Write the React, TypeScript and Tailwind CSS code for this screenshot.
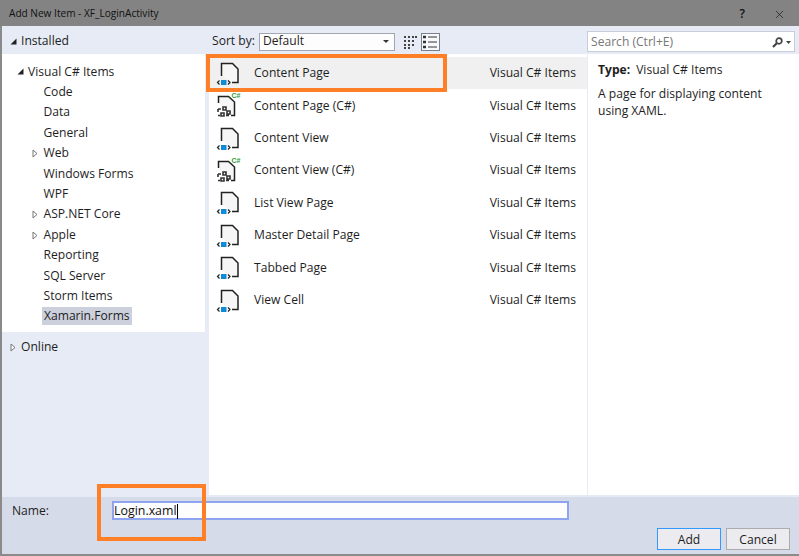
import React from 'react';
import { X } from 'lucide-react';

const treeItems = [
  { label: 'Code' },
  { label: 'Data' },
  { label: 'General' },
  { label: 'Web', arrow: true },
  { label: 'Windows Forms' },
  { label: 'WPF' },
  { label: 'ASP.NET Core', arrow: true },
  { label: 'Apple', arrow: true },
  { label: 'Reporting' },
  { label: 'SQL Server' },
  { label: 'Storm Items' },
];

const templates = [
  { name: 'Content Page', kind: 'xaml' },
  { name: 'Content Page (C#)', kind: 'cs' },
  { name: 'Content View', kind: 'xaml' },
  { name: 'Content View (C#)', kind: 'cs' },
  { name: 'List View Page', kind: 'xaml' },
  { name: 'Master Detail Page', kind: 'xaml' },
  { name: 'Tabbed Page', kind: 'xaml' },
  { name: 'View Cell', kind: 'xaml' },
];

const ExpandedArrow = () => (
  <svg width="7" height="7" viewBox="0 0 7 7" className="shrink-0">
    <path d="M6.5 0.5V6.5H0.5Z" fill="#222" />
  </svg>
);

const CollapsedArrow = () => (
  <svg width="6" height="9" viewBox="0 0 6 9" className="shrink-0">
    <path d="M1 1L5 4.5L1 8Z" fill="#fff" stroke="#777" />
  </svg>
);

const XamlIcon = () => (
  <svg width="26" height="26" viewBox="0 0 26 26" className="shrink-0">
    <path d="M5.5 16V3.5H16.5L22 9V22.5H16" fill="#f6f6f6" stroke="#222" strokeWidth="1.5" />
    <rect x="5" y="20" width="5.5" height="5" fill="#0e8bd6" />
    <path d="M3.5 20.5L1.5 22.5L3.5 24.5M12 20.5L14 22.5L12 24.5" fill="none" stroke="#222" strokeWidth="1.2" />
  </svg>
);

const CsIcon = () => (
  <svg width="28" height="26" viewBox="0 0 28 26" className="shrink-0">
    <path d="M2.5 11V4.5H12.5L18.5 10V23.5H15" fill="#f6f6f6" stroke="#222" strokeWidth="1.5" />
    <path d="M2 17H5M2 17V20M7 15H10V18H7ZM11 19H14V22H11ZM5 21H8V24H5ZM2 23.5H4M10 23.5H13" fill="none" stroke="#333" strokeWidth="1.6" />
    <text x="15.5" y="6" fontSize="7" fontWeight="700" fill="#2e9a3c" fontFamily="'Liberation Sans', sans-serif">C#</text>
  </svg>
);

const GridIcon = () => (
  <svg width="14" height="14" viewBox="0 0 14 14">
    <path d="M1 2H3M5 2H7M9 2H11M12 2H14M1 6H3M5 6H7M9 6H11M1 10H3M5 10H7M9 10H11M1 13H3M5 13H7" stroke="#444" strokeWidth="2" />
  </svg>
);

const ListIcon = () => (
  <svg width="14" height="14" viewBox="0 0 14 14">
    <path d="M0 2H3M0 7H3M0 12H3" stroke="#333" strokeWidth="2.4" />
    <path d="M5 2H14M5 7H14M5 12H14" stroke="#333" strokeWidth="1.2" />
  </svg>
);

const SearchGlyph = () => (
  <svg width="11" height="11" viewBox="0 0 11 11">
    <circle cx="7" cy="4" r="2.8" fill="none" stroke="#444" strokeWidth="1.7" />
    <path d="M4.8 6.2L1 10" stroke="#444" strokeWidth="2.2" />
  </svg>
);

export default function App() {
  return (
    <div className="relative flex h-[556px] w-[799px] flex-col overflow-hidden bg-[#e6ebf5] text-[12.1px] text-[#1e1e1e] font-['Open_Sans','Noto_Sans',sans-serif]">
      <div className="flex h-[26px] shrink-0 items-center justify-between bg-[#838383] pl-[9px] pr-[13px] pt-[2px] text-[10.1px] text-[#111]">
        <span>Add New Item - XF_LoginActivity</span>
        <div className="flex items-center gap-[28px]">
          <span className="text-[12px] font-semibold">?</span>
          <X size={13} strokeWidth={1.2} />
        </div>
      </div>

      <div className="flex min-h-0 flex-1 border-l-2 border-[#8a8a8a]">
        <div className="flex w-[207px] shrink-0 flex-col">
          <div className="flex h-[28px] shrink-0 items-center gap-[4px] pl-[8px] pt-[3px]">
            <ExpandedArrow />
            <span>Installed</span>
          </div>
          <div className="mr-[4px] flex h-[278px] shrink-0 flex-col bg-white pt-[7.5px]">
            <div className="flex h-[20.4px] items-center gap-[4px] pl-[15px]">
              <ExpandedArrow />
              <span>Visual C# Items</span>
            </div>
            {treeItems.map((item) => (
              <div key={item.label} className="relative flex h-[20.4px] items-center pl-[41.5px]">
                {item.arrow && (
                  <span className="absolute left-[30px] top-[6px]">
                    <CollapsedArrow />
                  </span>
                )}
                <span>{item.label}</span>
              </div>
            ))}
            <div className="flex h-[20.4px] items-center pl-[40px]">
              <span className="bg-[#ccd0dc] px-[2px]">Xamarin.Forms</span>
            </div>
          </div>
          <div className="flex h-[28px] items-center gap-[5px] pl-[8px] pt-[2px]">
            <CollapsedArrow />
            <span>Online</span>
          </div>
        </div>

        <div className="flex min-w-0 flex-1 flex-col pb-[2px]">
          <div className="flex h-[28px] shrink-0 items-center pl-[3px] pt-[3px]">
            <span className="mr-[4px]">Sort by:</span>
            <div className="flex h-[18px] w-[136px] items-center justify-between border border-[#a3a7b2] bg-[#fdfdfd] pl-[3px] pr-[5px]">
              <span>Default</span>
              <svg width="6" height="3" viewBox="0 0 6 3"><path d="M0 0H6L3 3Z" fill="#333" /></svg>
            </div>
            <div className="ml-[6px] flex h-[18px] w-[18px] items-center justify-center">
              <GridIcon />
            </div>
            <div className="ml-[2px] flex h-[18px] w-[19px] items-center justify-center border border-[#7a7f8c] bg-[#f7f8fb]">
              <ListIcon />
            </div>
          </div>
          <div className="flex min-h-0 flex-1">
            <div className="w-[378px] shrink-0 bg-white pt-[2.6px]">
              {templates.map((t, i) => (
                <div
                  key={t.name}
                  className={i === 0 ? 'flex h-[32.4px] items-center bg-[#f0f0f0] pr-[11px]' : 'flex h-[32.4px] items-center pr-[11px]'}
                >
                  <div className="flex w-[45px] shrink-0 pl-[7px]">
                    {t.kind === 'xaml' ? <XamlIcon /> : <CsIcon />}
                  </div>
                  <span className="flex-1 pt-[1px]">{t.name}</span>
                  <span className="pt-[1px]">Visual C# Items</span>
                </div>
              ))}
            </div>
            <div className="min-w-0 flex-1 border-l border-[#e8ebf3] bg-white pl-[10px] pt-[7px]">
              <div className="leading-[17px]">
                <span className="font-bold">Type:</span>
                <span className="ml-[6px]">Visual C# Items</span>
              </div>
              <div className="mt-[7px] leading-[17px]">
                A page for displaying content
                <br />
                using XAML.
              </div>
            </div>
          </div>
        </div>
      </div>

      <div className="absolute left-[587px] top-[31px] flex h-[21px] w-[208px] items-center justify-between border border-[#c8cddb] bg-white pl-[3px] pr-[3px] pt-[1px] text-[#777]">
        <span>Search (Ctrl+E)</span>
        <span className="flex items-center gap-[3px]">
          <SearchGlyph />
          <svg width="5" height="3" viewBox="0 0 5 3"><path d="M0 0H5L2.5 3Z" fill="#444" /></svg>
        </span>
      </div>

      <div className="flex h-[59px] shrink-0 flex-col border-b-2 border-l-2 border-[#8a8a8a] bg-[#d6dbe9] pl-[10px] pr-[9px]">
        <div className="flex items-center pt-[4px]">
          <span className="w-[100px] pt-[1px]">Name:</span>
          <div className="flex h-[19px] w-[457px] items-center border-2 border-[#8fa4f0] bg-[#fdfdfd] pt-[1px]">
            <span className="text-[12.4px] text-[#111]">Login.xaml</span>
            <span className="h-[15px] w-px bg-black" />
          </div>
        </div>
        <div className="mt-[8px] flex justify-end gap-[5px]">
          <div className="flex h-[22px] w-[64px] items-center justify-center border border-[#3399ff] bg-[#ececf0] pt-[1px]">Add</div>
          <div className="flex h-[22px] w-[64px] items-center justify-center border border-[#acacac] bg-[#ececf0] pt-[1px]">Cancel</div>
        </div>
      </div>

      <div className="absolute left-[206px] top-[54px] h-[38px] w-[241px] border-[4px] border-[#ff7f27]" />
      <div className="absolute left-[97px] top-[484px] h-[57px] w-[109px] border-[4px] border-[#ff7f27]" />
    </div>
  );
}
